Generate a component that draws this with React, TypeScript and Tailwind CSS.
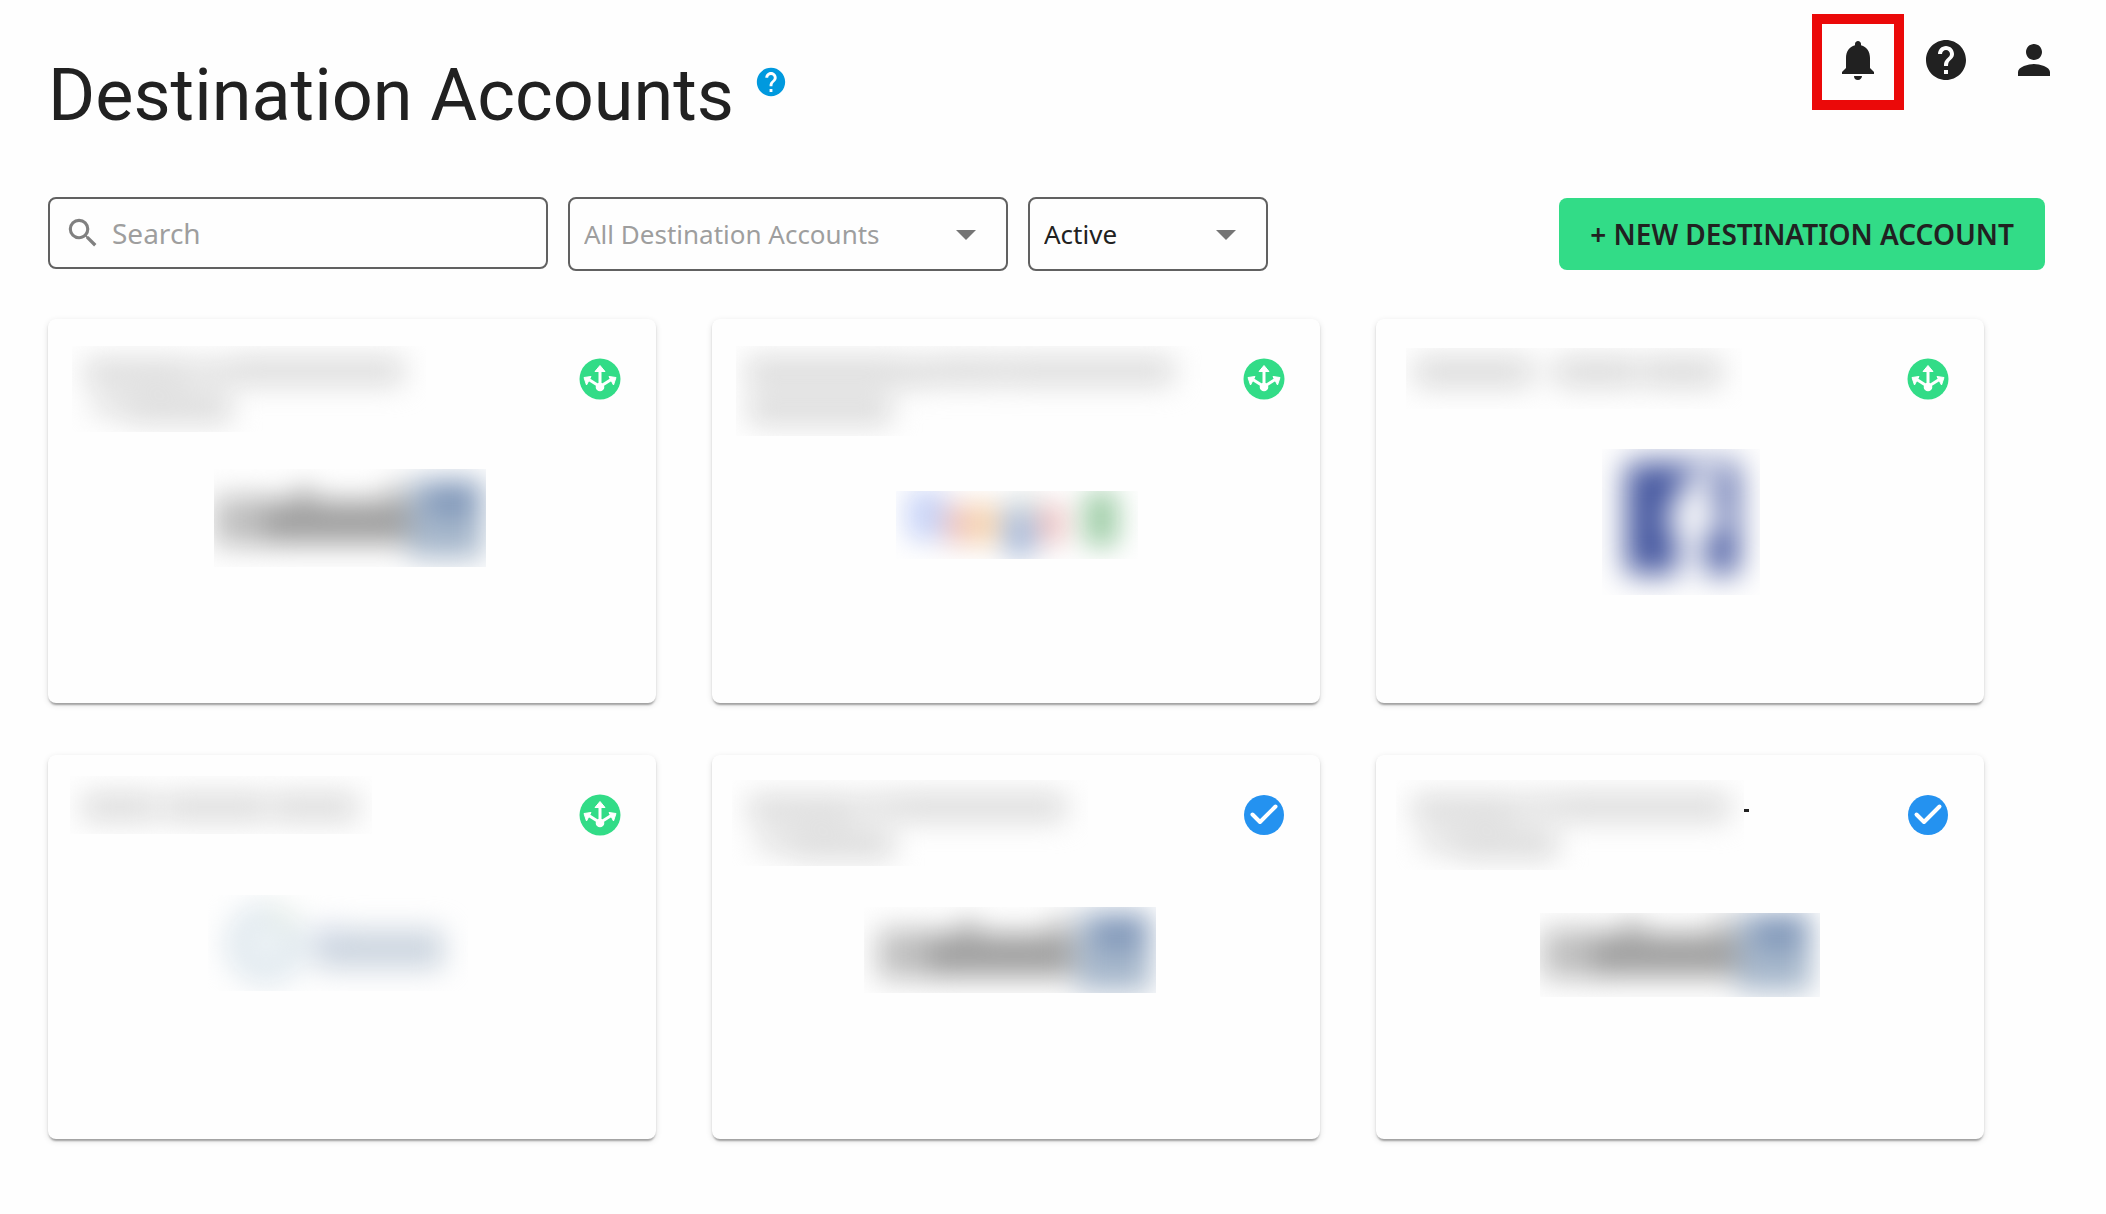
import { useId, type ReactNode } from "react";
import { MdArrowDropDown, MdHelp, MdNotifications, MdPerson, MdSearch } from "react-icons/md";

type Box = [x: number, y: number, width: number, height: number];

function Smudge({
  width,
  height,
  clip,
  blur,
  label,
  children,
}: {
  width: number;
  height: number;
  clip: Box;
  blur: number;
  label: string;
  children: ReactNode;
}) {
  const id = useId();
  const [x, y, w, h] = clip;
  return (
    <svg width={width} height={height} viewBox={`0 0 ${width} ${height}`} role="img" aria-label={label} className="block shrink-0">
      <defs>
        <clipPath id={`${id}c`}>
          <rect x={x} y={y} width={w} height={h} />
        </clipPath>
        <filter id={`${id}b`} x="-30%" y="-100%" width="160%" height="300%" colorInterpolationFilters="sRGB">
          <feGaussianBlur stdDeviation={blur} />
        </filter>
      </defs>
      <g clipPath={`url(#${id}c)`}>
        <g filter={`url(#${id}b)`}>{children}</g>
      </g>
    </svg>
  );
}

function HiddenName({ clip, words }: { clip: Box; words: Box[] }) {
  return (
    <Smudge width={476} height={100} clip={clip} blur={14} label="Hidden account name">
      {words.map(([x, y, w, h], i) => (
        <rect key={i} x={x} y={y} width={w} height={h} rx="6" fill="#dcdcdc" />
      ))}
    </Smudge>
  );
}

function LinkedInMark({ clip, x, y, squareX }: { clip: Box; x: number; y: number; squareX: number }) {
  return (
    <Smudge width={304} height={150} clip={clip} blur={14} label="LinkedIn">
      <rect x={x - 6} y={y + 14} width="56" height="50" fill="#c0c0c0" />
      <rect x={x + 44} y={y + 18} width="146" height="44" fill="#a0a0a0" />
      <rect x={x + 76} y={y + 6} width="16" height="20" fill="#a0a0a0" />
      <rect x={x + 168} y={y + 2} width="14" height="20" fill="#b2b2b2" />
      <rect x={squareX - 2} y={y - 2} width="74" height="78" rx="4" fill="#a6b7cb" />
      <rect x={squareX + 16} y={y} width="50" height="34" fill="#8097b9" />
    </Smudge>
  );
}

function GoogleMark() {
  return (
    <Smudge width={304} height={150} clip={[32, 44, 242, 68]} blur={13} label="Google">
      <rect x="42" y="42" width="42" height="52" rx="12" fill="#cbd6f8" />
      <rect x="80" y="56" width="26" height="42" rx="8" fill="#efc6c4" />
      <rect x="102" y="56" width="34" height="42" rx="8" fill="#f6d6b4" />
      <rect x="139" y="56" width="34" height="54" rx="8" fill="#aebfdc" />
      <rect x="150" y="46" width="24" height="22" fill="#dce3e0" />
      <rect x="174" y="56" width="28" height="42" rx="8" fill="#eec6c6" />
      <rect x="219" y="44" width="36" height="56" rx="10" fill="#a4d0ac" />
    </Smudge>
  );
}

function FacebookMark() {
  return (
    <Smudge width={304} height={150} clip={[74, 2, 158, 146]} blur={15} label="Facebook">
      <rect x="98" y="15" width="112" height="112" fill="#4658a0" />
      <path d="M150 130V84H140V58H150C150 34 162 22 194 22V44C178 44 178 50 178 58H198L194 84H178V130Z" fill="#fefefe" />
    </Smudge>
  );
}

function PartnerMark() {
  return (
    <Smudge width={304} height={150} clip={[8, 12, 260, 96]} blur={14} label="Partner">
      <circle cx="66" cy="61" r="30" fill="#eff4f7" stroke="#dfe8ee" strokeWidth="22" />
      <path d="M72 28A32 32 0 0 1 92 44" fill="none" stroke="#e6efe2" strokeWidth="12" />
      <rect x="114" y="46" width="130" height="40" rx="6" fill="#cdd6e0" />
      <rect x="116" y="42" width="22" height="22" fill="#d0d8e6" />
    </Smudge>
  );
}

function RoutesIcon() {
  return (
    <svg viewBox="0 0 48 48" role="img" aria-label="Distributing" className="size-12 shrink-0">
      <circle cx="24" cy="24" r="20.500" fill="#32dc87" />
      <path d="M24 32V14M23 31L12 24M25 31L36 24" fill="none" stroke="#fff" strokeWidth="3" />
      <circle cx="24" cy="32" r="4.300" fill="#fff" />
      <path d="M24 10.500L29 16.500H19Z" fill="#fff" stroke="#fff" strokeWidth="1" strokeLinejoin="round" />
      <path d="M8 22.500L15 21.500L10.500 30Z" fill="#fff" stroke="#fff" strokeWidth="1" strokeLinejoin="round" />
      <path d="M40 22.500L33 21.500L37.500 30Z" fill="#fff" stroke="#fff" strokeWidth="1" strokeLinejoin="round" />
    </svg>
  );
}

function CheckIcon() {
  return (
    <svg viewBox="0 0 48 48" role="img" aria-label="Connected" className="size-12 shrink-0">
      <circle cx="24" cy="24" r="20" fill="#2492f0" />
      <path d="M12.500 23.500L20 31L35.500 15.500" fill="none" stroke="#fff" strokeWidth="4" strokeLinecap="round" strokeLinejoin="round" />
    </svg>
  );
}

type Account = {
  clip: Box;
  words: Box[];
  mark: ReactNode;
  connected?: boolean;
  trailing?: boolean;
};

const accounts: Account[] = [
  {
    clip: [4, 7, 354, 86],
    words: [[16, 20, 108, 28], [126, 22, 40, 22], [164, 18, 172, 28], [24, 58, 50, 18], [58, 54, 106, 30]],
    mark: <LinkedInMark clip={[14, 22, 272, 98]} x={20} y={35} squareX={211} />,
  },
  {
    clip: [4, 7, 466, 90],
    words: [[14, 18, 156, 30], [164, 20, 36, 28], [200, 18, 74, 28], [274, 18, 168, 28], [16, 56, 144, 30]],
    mark: <GoogleMark />,
  },
  {
    clip: [10, 9, 336, 61],
    words: [[18, 18, 118, 30], [144, 28, 12, 10], [160, 18, 82, 30], [246, 18, 80, 30]],
    mark: <FacebookMark />,
  },
  {
    clip: [2, 1, 302, 58],
    words: [[14, 18, 76, 28], [96, 18, 104, 28], [204, 18, 86, 28]],
    mark: <PartnerMark />,
  },
  {
    clip: [0, 5, 356, 86],
    words: [[16, 20, 108, 28], [126, 20, 40, 22], [164, 18, 170, 28], [24, 58, 50, 18], [58, 54, 104, 30]],
    mark: <LinkedInMark clip={[0, 24, 292, 86]} x={20} y={32} squareX={215} />,
    connected: true,
  },
  {
    clip: [0, 5, 348, 90],
    words: [[16, 20, 108, 28], [126, 20, 40, 22], [164, 18, 170, 28], [24, 58, 50, 18], [58, 54, 104, 30]],
    mark: <LinkedInMark clip={[12, 30, 280, 84]} x={20} y={32} squareX={211} />,
    connected: true,
    trailing: true,
  },
];

function AccountCard({ clip, words, mark, connected, trailing }: Account) {
  return (
    <article className="flex h-96 flex-col gap-2 rounded-lg bg-[#fefefe] pt-5 pl-5 shadow-[0_4px_2px_-2px_rgba(0,0,0,0.2),0_2px_2px_0_rgba(0,0,0,0.14),0_2px_6px_0_rgba(0,0,0,0.12)]">
      <div className="flex items-start justify-between pr-8">
        <div className="relative min-w-0 overflow-hidden">
          <HiddenName clip={clip} words={words} />
          {trailing && <span className="absolute top-[34px] left-[348px] h-[3px] w-[5px] bg-[#212121]" />}
        </div>
        <div className="pt-4">{connected ? <CheckIcon /> : <RoutesIcon />}</div>
      </div>
      <div className="flex justify-center pr-5">{mark}</div>
    </article>
  );
}

export default function App() {
  return (
    <main className="min-h-screen bg-[#fefefe] pb-16 font-['Noto_Sans',sans-serif] text-[#212121]">
      <header className="flex items-start justify-between pl-12">
        <div className="flex items-start gap-5 pt-[50px]">
          <h1 className="font-['Roboto',sans-serif] text-[72px] leading-[92px] font-normal">Destination Accounts</h1>
          <button type="button" aria-label="About destination accounts" className="mt-[15px] rounded-full text-[#0099de]">
            <MdHelp className="size-[34px]" />
          </button>
        </div>
        <nav aria-label="Account" className="flex items-center pt-[14px] pr-7">
          <button type="button" aria-label="Notifications" className="flex h-24 w-[92px] items-center justify-center border-[10px] border-[#eb0909] pb-1">
            <MdNotifications className="size-12 shrink-0" />
          </button>
          <button type="button" aria-label="Help" className="flex h-24 w-[86px] items-center justify-center pr-0.5 pb-1">
            <MdHelp className="size-12" />
          </button>
          <button type="button" aria-label="Profile" className="flex h-24 w-[88px] items-center justify-center pb-1">
            <MdPerson className="size-12" />
          </button>
        </nav>
      </header>

      <section aria-label="Filters" className="mt-[55px] flex items-start pr-[61px] pl-12">
        <label className="flex h-[72px] w-[500px] items-center gap-2.5 rounded-lg border-2 border-[#616161] pr-4 pl-[14px]">
          <MdSearch className="size-[38px] shrink-0 text-[#808080]" />
          <input
            type="text"
            placeholder="Search"
            aria-label="Search"
            className="w-full min-w-0 bg-transparent text-[28px] leading-9 outline-none placeholder:text-[#9e9e9e]"
          />
        </label>
        <div className="relative ml-5 h-[74px] w-[440px]">
          <select
            aria-label="Destination account"
            className="size-full appearance-none rounded-lg border-2 border-[#616161] bg-transparent pr-16 pl-[14px] text-[26px] text-[#9e9e9e]"
          >
            <option>All Destination Accounts</option>
          </select>
          <MdArrowDropDown className="pointer-events-none absolute top-[13px] right-[18px] size-12 text-[#757575]" />
        </div>
        <div className="relative ml-5 h-[74px] w-60">
          <select
            aria-label="Status"
            className="size-full appearance-none rounded-lg border-2 border-[#616161] bg-transparent pr-16 pl-[14px] text-[26px]"
          >
            <option>Active</option>
            <option>Inactive</option>
          </select>
          <MdArrowDropDown className="pointer-events-none absolute top-[13px] right-[18px] size-12 text-[#757575]" />
        </div>
        <button type="button" className="mt-px ml-auto h-[72px] rounded-lg bg-[#32dc87] px-[31px] text-[28px] font-semibold whitespace-nowrap">
          + NEW DESTINATION ACCOUNT
        </button>
      </section>

      <section aria-label="Accounts" className="mt-12 grid grid-cols-3 gap-x-14 gap-y-[52px] pr-[122px] pl-12">
        {accounts.map((account, i) => (
          <AccountCard key={i} {...account} />
        ))}
      </section>
    </main>
  );
}
